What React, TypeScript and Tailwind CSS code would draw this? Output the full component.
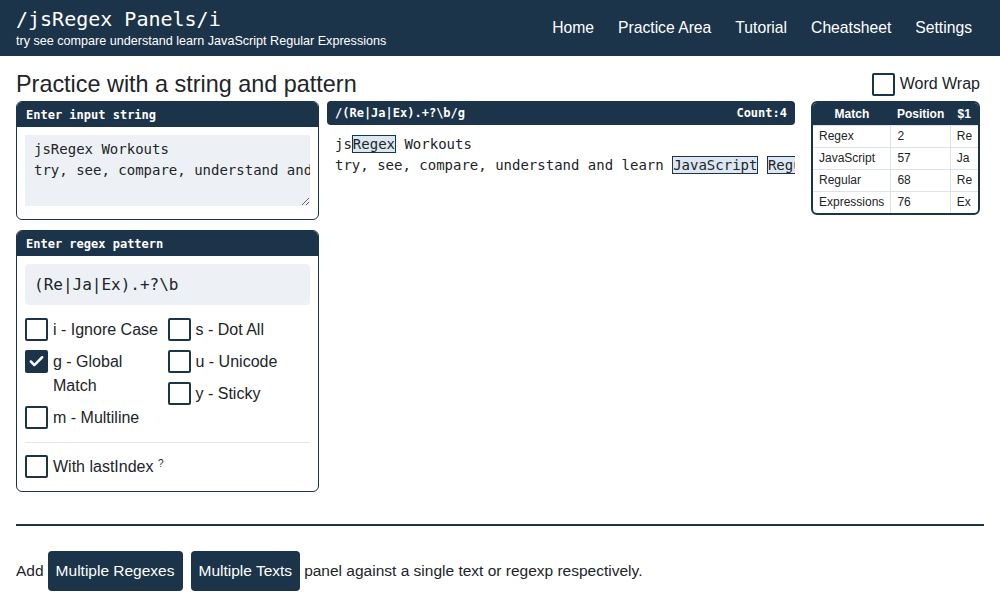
import { Check } from "lucide-react";

const NAV = ["Home", "Practice Area", "Tutorial", "Cheatsheet", "Settings"];

const ROWS = [
  ["Regex", "2", "Re"],
  ["JavaScript", "57", "Ja"],
  ["Regular", "68", "Re"],
  ["Expressions", "76", "Ex"],
];

function Box({ checked }: { checked?: boolean }) {
  return (
    <span
      className={
        checked
          ? "flex h-[23px] w-[23px] shrink-0 items-center justify-center rounded-[2px] border-2 border-[#1c3449] bg-[#1c3449] text-white"
          : "flex h-[23px] w-[23px] shrink-0 rounded-[2px] border-2 border-[#1c3449] bg-white"
      }
    >
      {checked && <Check size={17} strokeWidth={3.5} />}
    </span>
  );
}

function Flag({ label, checked }: { label: React.ReactNode; checked?: boolean }) {
  return (
    <label className="flex items-start gap-[5px] text-base leading-6">
      <Box checked={checked} />
      <span>{label}</span>
    </label>
  );
}

function Hl({ children }: { children: React.ReactNode }) {
  return <span className="border border-[#1c3449] bg-[#dde7f1]">{children}</span>;
}

export default function App() {
  return (
    <div className="min-h-[600px] bg-white font-['Liberation_Sans',Arial,sans-serif] text-[#212529]">
      <header className="flex h-14 items-center justify-between bg-[#1c3449] px-4 text-white">
        <div>
          <div className="font-['DejaVu_Sans_Mono',monospace] text-[20px] leading-6">/jsRegex Panels/i</div>
          <div className="mt-[2px] text-[12.6px] leading-4">try see compare understand learn JavaScript Regular Expressions</div>
        </div>
        <nav className="flex">
          {NAV.map((n) => (
            <a key={n} className="px-3 text-[15.7px]">
              {n}
            </a>
          ))}
        </nav>
      </header>

      <main className="px-4">
        <div className="mt-[11px] flex h-[34px] items-center justify-between">
          <h1 className="text-[23.4px] leading-8">Practice with a string and pattern</h1>
          <label className="flex items-center gap-[5px] pr-1 text-base">
            <Box />
            <span>Word Wrap</span>
          </label>
        </div>

        <div className="grid grid-cols-[303px_476px_auto] items-start">
          <div className="flex flex-col gap-[10px]">
            <section className="overflow-hidden rounded-md border border-[#1c3449]">
              <div className="flex h-[25px] items-center bg-[#1c3449] px-[9px] font-['DejaVu_Sans_Mono',monospace] text-xs font-bold text-white">
                Enter input string
              </div>
              <div className="p-2 pb-[13px]">
                <textarea
                  wrap="off"
                  readOnly
                  className="block h-[71px] w-full resize-y overflow-hidden bg-[#edf1f5] px-[9px] pt-1 font-['DejaVu_Sans_Mono',monospace] text-sm leading-[21px] outline-none"
                  value={"jsRegex Workouts\ntry, see, compare, understand and learn JavaScript Regular Expressions"}
                />
              </div>
            </section>

            <section className="overflow-hidden rounded-md border border-[#1c3449]">
              <div className="flex h-[25px] items-center bg-[#1c3449] px-[9px] font-['DejaVu_Sans_Mono',monospace] text-xs font-bold text-white">
                Enter regex pattern
              </div>
              <div className="p-2 pb-3">
                <div className="flex h-[41px] items-center rounded bg-[#edf1f5] px-[9px] font-['DejaVu_Sans_Mono',monospace] text-base">
                  (Re|Ja|Ex).+?\b
                </div>
                <div className="mt-[13px] grid grid-cols-2">
                  <div className="flex flex-col gap-2">
                    <Flag label="i - Ignore Case" />
                    <Flag label="g - Global Match" checked />
                    <Flag label="m - Multiline" />
                  </div>
                  <div className="flex flex-col gap-2">
                    <Flag label="s - Dot All" />
                    <Flag label="u - Unicode" />
                    <Flag label="y - Sticky" />
                  </div>
                </div>
                <div className="mt-3 border-t border-[#e3e6ea] pt-3">
                  <Flag
                    label={
                      <>
                        With lastIndex <sup className="text-[10px]">?</sup>
                      </>
                    }
                  />
                </div>
              </div>
            </section>
          </div>

          <section className="ml-2 min-w-0">
            <div className="flex h-6 items-center justify-between rounded bg-[#1c3449] px-2 font-['DejaVu_Sans_Mono',monospace] text-xs font-bold text-white">
              <span>/(Re|Ja|Ex).+?\b/g</span>
              <span>Count:4</span>
            </div>
            <div className="overflow-hidden whitespace-pre px-2 pt-[9px] font-['DejaVu_Sans_Mono',monospace] text-sm leading-[21px]">
              <div>
                js<Hl>Regex</Hl> Workouts
              </div>
              <div>
                try, see, compare, understand and learn <Hl>JavaScript</Hl> <Hl>Regular</Hl> <Hl>Expressions</Hl>
              </div>
            </div>
          </section>

          <div className="ml-4 w-fit overflow-hidden rounded-md border-2 border-[#1c3449]">
            <table className="border-collapse text-xs">
              <thead>
                <tr className="h-[22px] bg-[#1c3449] text-white">
                  <th className="px-[6px] font-bold">Match</th>
                  <th className="px-[6px] font-bold">Position</th>
                  <th className="px-[6px] font-bold">$1</th>
                </tr>
              </thead>
              <tbody>
                {ROWS.map((r) => (
                  <tr key={r[0]} className="h-[22px]">
                    {r.map((c, i) => (
                      <td
                        key={i}
                        className={
                          i === 0
                            ? "border-t border-[#dce2e9] px-[6px]"
                            : "border-l border-t border-[#dce2e9] px-[6px]"
                        }
                      >
                        {c}
                      </td>
                    ))}
                  </tr>
                ))}
              </tbody>
            </table>
          </div>
        </div>

        <hr className="mt-8 border-t-2 border-[#1c3449]" />

        <div className="mt-[25px] flex items-center text-[15.5px]">
          <span>Add</span>
          <button className="mx-1 h-10 rounded bg-[#1c3449] px-2 text-white">Multiple Regexes</button>
          <button className="mx-1 h-10 rounded bg-[#1c3449] px-2 text-white">Multiple Texts</button>
          <span>panel against a single text or regexp respectively.</span>
        </div>
      </main>
    </div>
  );
}
